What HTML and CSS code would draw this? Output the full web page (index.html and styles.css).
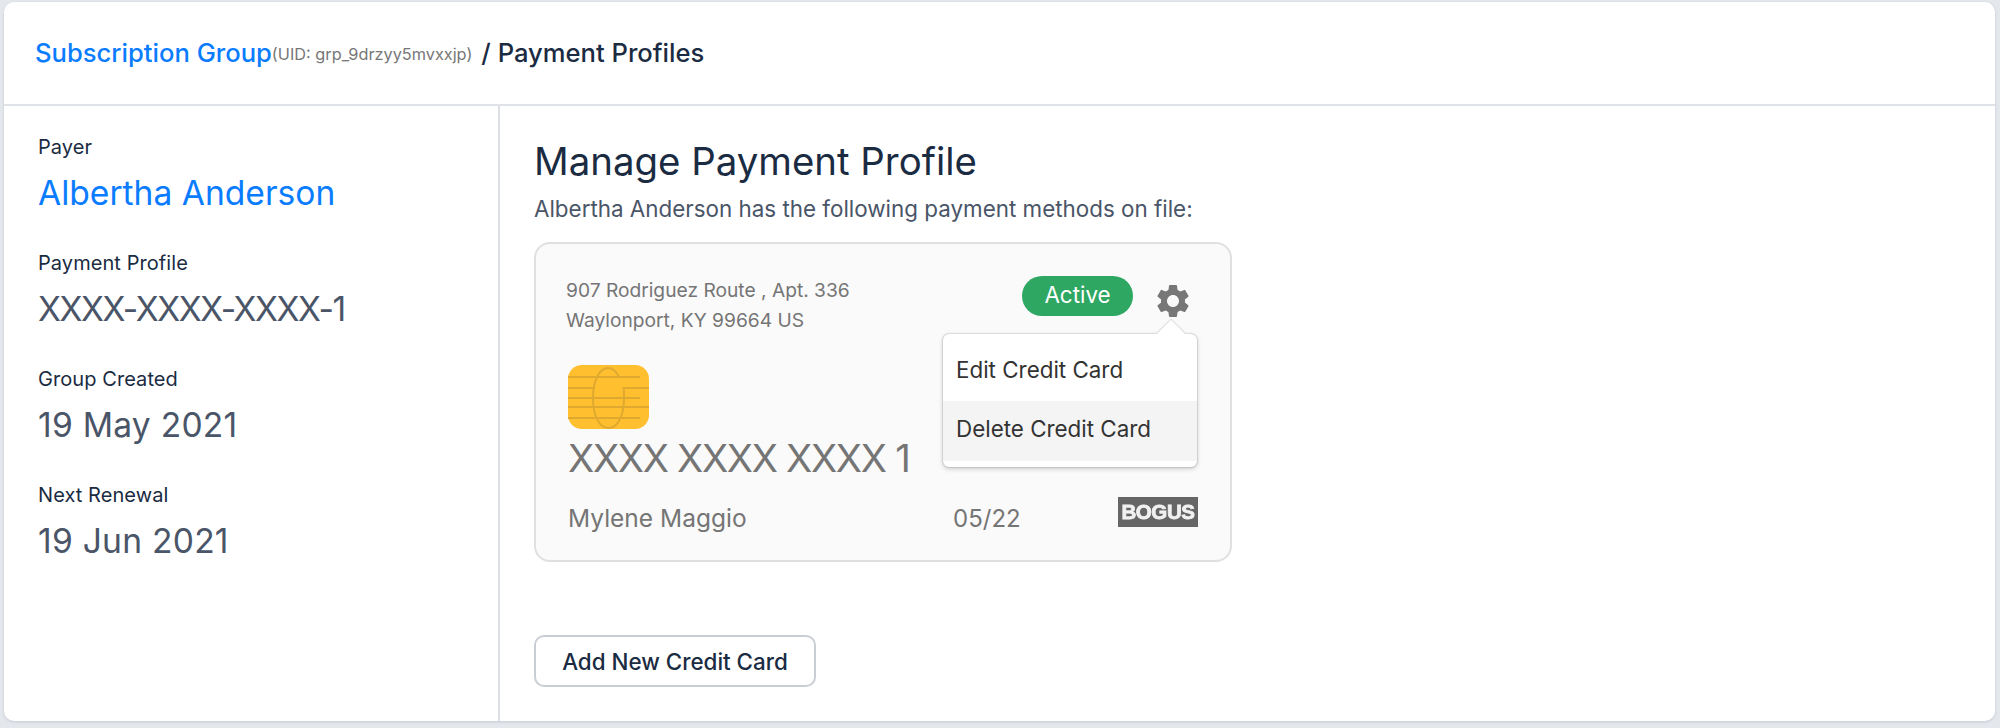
FILE: index.html
```html
<!DOCTYPE html>
<html lang="en">
<head>
<meta charset="utf-8">
<title>Payment Profiles</title>
<link rel="stylesheet" href="styles.css">
</head>
<body>
<main class="panel">
  <header class="topbar">
    <a class="crumb-link">Subscription Group</a><span class="uid">(UID: grp_9drzyy5mvxxjp)</span><span class="crumb-current">/ Payment Profiles</span>
  </header>
  <div class="columns">
    <aside class="side">
      <div class="fact">
        <div class="fact-label">Payer</div>
        <a class="fact-value fact-link">Albertha Anderson</a>
      </div>
      <div class="fact">
        <div class="fact-label">Payment Profile</div>
        <div class="fact-value fact-mask">XXXX-XXXX-XXXX-1</div>
      </div>
      <div class="fact">
        <div class="fact-label">Group Created</div>
        <div class="fact-value fact-date">19 May 2021</div>
      </div>
      <div class="fact">
        <div class="fact-label">Next Renewal</div>
        <div class="fact-value fact-date">19 Jun 2021</div>
      </div>
    </aside>
    <section class="content">
      <h1 class="title">Manage Payment Profile</h1>
      <p class="subtitle">Albertha Anderson has the following payment methods on file:</p>
      <article class="card">
        <div class="card-top">
          <div class="address">907 Rodriguez Route , Apt. 336<br>Waylonport, KY 99664 US</div>
          <div class="card-actions">
            <span class="badge">Active</span>
            <svg class="gear" viewBox="0 0 24 24" aria-hidden="true"><path d="M19.14 12.94c.04-.3.06-.61.06-.94 0-.32-.02-.64-.07-.94l2.03-1.58a.49.49 0 0 0 .12-.61l-1.92-3.32a.488.488 0 0 0-.59-.22l-2.39.96c-.5-.38-1.03-.7-1.62-.94l-.36-2.54a.484.484 0 0 0-.48-.41h-3.84c-.24 0-.43.17-.47.41l-.36 2.54c-.59.24-1.13.57-1.62.94l-2.39-.96c-.22-.08-.47 0-.59.22L2.74 8.87c-.12.21-.08.47.12.61l2.03 1.58c-.05.3-.09.63-.09.94s.02.64.07.94l-2.03 1.58a.49.49 0 0 0-.12.61l1.92 3.32c.12.22.37.29.59.22l2.39-.96c.5.38 1.03.7 1.62.94l.36 2.54c.05.24.24.41.48.41h3.84c.24 0 .44-.17.47-.41l.36-2.54c.59-.24 1.13-.56 1.62-.94l2.39.96c.22.08.47 0 .59-.22l1.92-3.32c.12-.22.07-.47-.12-.61l-2.01-1.58zM12 15.6c-1.98 0-3.6-1.62-3.6-3.6s1.62-3.6 3.6-3.6 3.6 1.62 3.6 3.6-1.62 3.6-3.6 3.6z"/></svg>
          </div>
        </div>
        <svg class="chip" viewBox="0 0 81 64" aria-hidden="true">
          <rect class="chip-body" width="81" height="64" rx="14"/>
          <g class="chip-lines">
            <path d="M0 12H72M0 23H25M0 33H72M0 42H81M0 53H72"/>
            <path d="M51 12C48 6 45 3 40.500 3C31 3 25 16 25 33C25 50 31 63 40.500 63C50 63 56 50 56 33C56 29 56 26 55.500 23H81"/>
          </g>
        </svg>
        <div class="card-number">XXXX XXXX XXXX 1</div>
        <div class="card-bottom">
          <span class="holder">Mylene Maggio</span>
          <span class="expiry">05/22</span>
          <span class="brand"><span class="brand-text">BOGUS</span></span>
        </div>
        <div class="menu">
          <div class="menu-item">Edit Credit Card</div>
          <div class="menu-item menu-item-hover">Delete Credit Card</div>
        </div>
      </article>
      <button class="add-btn" type="button">Add New Credit Card</button>
    </section>
  </div>
</main>
</body>
</html>
```
FILE: styles.css
```css
* { box-sizing: border-box; }
html, body { margin: 0; height: 100%; }
body {
  background: #e4e8ed;
  font-family: "Inter", "Liberation Sans", sans-serif;
  padding: 2px 5px 7px 4px;
  overflow: hidden;
}
.panel {
  height: 719px;
  background: #fff;
  border-radius: 10px;
  display: flex;
  flex-direction: column;
  box-shadow: 0 1px 3px rgba(60, 70, 90, .18);
}
.topbar {
  height: 104px;
  flex: none;
  border-bottom: 2px solid #dfe3e7;
  padding: 0 0 2px 31px;
  display: flex;
  align-items: center;
  font-size: 25.6px;
  font-weight: 450;
  color: #1a2b42;
}
.crumb-link { color: #0a7cff; }
.uid { font-size: 16.3px; font-weight: 400; color: #777; margin: 3px 9px 0 0; }
.columns { flex: 1; display: flex; min-height: 0; }
.side {
  width: 496px;
  flex: none;
  border-right: 2px solid #dcdfe3;
  padding: 27px 0 0 34px;
}
.fact { height: 116px; }
.fact-label { font-size: 20px; font-weight: 440; letter-spacing: .07px; line-height: 28px; color: #1a2b42; }
.fact-value { display: block; font-size: 33.6px; line-height: 48px; margin-top: 8px; color: #4a5568; }
.fact-link { color: #0a7cff; }
.fact-mask { letter-spacing: -1.4px; }
.fact-date { letter-spacing: .25px; }
.content { flex: 1; padding: 32px 0 0 34px; }
.title { margin: 0; font-size: 38.4px; font-weight: 400; line-height: 46px; color: #1a2b42; }
.subtitle { margin: 9px 0 0; font-size: 22.4px; line-height: 32px; color: #4a5568; }
.card {
  position: relative;
  width: 698px;
  height: 320px;
  margin-top: 17px;
  background: #fafafa;
  border: 2px solid #e0e0e0;
  border-radius: 16px;
  padding: 32px 30px 0 31px;
  color: #757575;
}
.card-top { display: flex; justify-content: space-between; align-items: flex-start; height: 89px; }
.address { font-size: 19.2px; line-height: 30px; margin: -1px 0 0 -1px; }
.card-actions { display: flex; align-items: flex-start; gap: 20px; margin: 0 5px 0 0; }
.badge {
  width: 111px;
  height: 40px;
  border-radius: 20px;
  background: #2ea763;
  color: #fff;
  font-size: 22.4px;
  line-height: 38px;
  text-align: center;
}
.gear { width: 40px; height: 40px; fill: #777; display: block; margin: 5px 2px 0 0; }
.chip { display: block; width: 81px; height: 64px; margin-left: 1px; }
.chip-body { fill: #ffbf2e; }
.chip-lines { fill: none; stroke: #dfa930; stroke-width: 2; }
.card-number { font-size: 38.4px; letter-spacing: -1.3px; line-height: 46px; margin: 6px 0 0 1px; }
.card-bottom { display: flex; align-items: center; height: 30px; margin: 22px 0 0 1px; position: relative; }
.holder { font-size: 24.5px; width: 385px; }
.expiry { font-size: 24px; }
.brand {
  width: 80px;
  height: 30px;
  margin: -12px 2px 0 auto;
  background: #666;
  display: flex;
  align-items: center;
  justify-content: center;
}
.brand-text { color: #f0f0f0; font: 700 20.5px/1 "Liberation Sans", sans-serif; letter-spacing: -.4px; filter: blur(.7px); -webkit-text-stroke: .8px #f4f4f4; }
.menu {
  position: absolute;
  left: 407px;
  top: 90px;
  width: 254px;
  height: 133px;
  background: #fff;
  border-radius: 6px;
  box-shadow: 0 0 2px rgba(0, 0, 0, .35), 0 2px 5px rgba(0, 0, 0, .18);
  padding: 7px 0 0;
  color: #333;
  font-size: 22.4px;
}
.menu::before {
  content: "";
  position: absolute;
  right: 16px;
  top: -10px;
  width: 20px;
  height: 20px;
  background: #fff;
  transform: rotate(45deg);
  box-shadow: -1px -1px 1px rgba(0, 0, 0, .12);
}
.menu-item { position: relative; height: 60px; line-height: 58px; padding-left: 13px; }
.menu-item-hover { background: #f4f4f4; line-height: 56px; }
.add-btn {
  display: block;
  margin-top: 73px;
  width: 282px;
  height: 52px;
  background: #fff;
  border: 2px solid #c9ced4;
  border-radius: 10px;
  font: 450 22.4px "Inter", "Liberation Sans", sans-serif;
  color: #1a2b42;
  padding: 0;
}
```
